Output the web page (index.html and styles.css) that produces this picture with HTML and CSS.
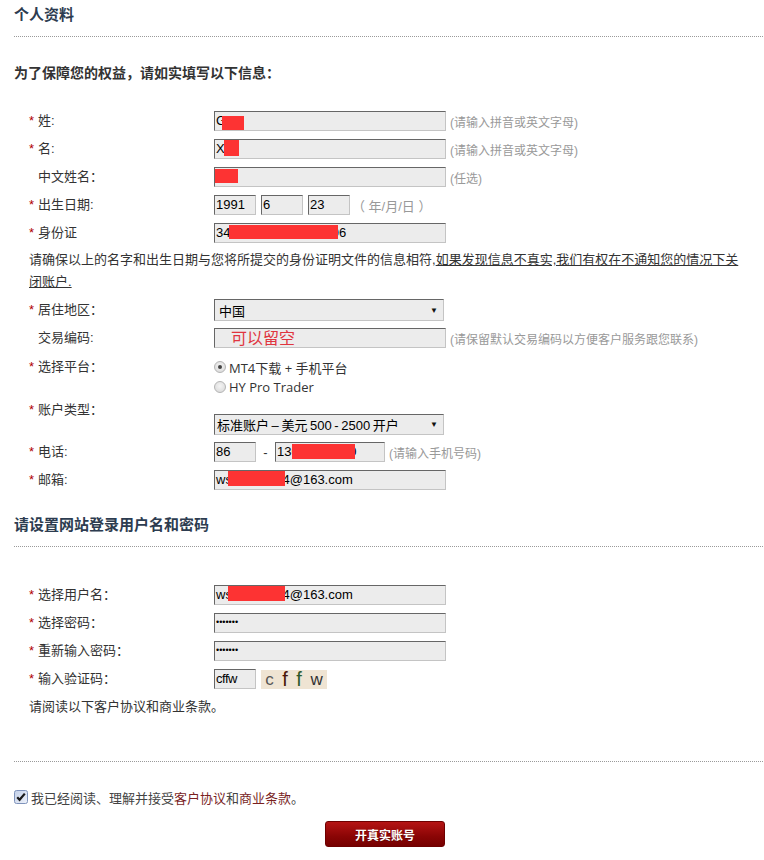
FILE: index.html
```html
<!DOCTYPE html>
<html lang="zh-CN">
<head>
<meta charset="utf-8">
<title>个人资料</title>
<link rel="stylesheet" href="styles.css">
</head>
<body>
<div class="page">
  <h2 class="section-title">个人资料</h2>
  <p class="intro">为了保障您的权益，请如实填写以下信息：</p>

  <div class="rows rows-first">
    <div class="row">
      <span class="lbl"><span class="star">*</span>姓:</span>
      <div class="field w-full">G<span class="redact r-last"></span></div>
      <span class="hint">(请输入拼音或英文字母)</span>
    </div>
    <div class="row">
      <span class="lbl"><span class="star">*</span>名:</span>
      <div class="field w-full">Xi<span class="redact r-first"></span></div>
      <span class="hint">(请输入拼音或英文字母)</span>
    </div>
    <div class="row">
      <span class="lbl lbl-plain">中文姓名：</span>
      <div class="field w-full"><span class="redact r-cn"></span></div>
      <span class="hint">(任选)</span>
    </div>
    <div class="row">
      <span class="lbl"><span class="star">*</span>出生日期:</span>
      <div class="date">
        <div class="field w-sm">1991</div>
        <div class="field w-sm">6</div>
        <div class="field w-sm">23</div>
      </div>
      <span class="hint hint-date">（ 年/月/日 ）</span>
    </div>
    <div class="row">
      <span class="lbl"><span class="star">*</span>身份证</span>
      <div class="field w-full">340000000000000006<span class="redact r-id"></span></div>
    </div>
  </div>

  <p class="notice">请确保以上的名字和出生日期与您将所提交的身份证明文件的信息相符,<u>如果发现信息不真实,我们有权在不通知您的情况下关闭账户.</u></p>

  <div class="rows">
    <div class="row row-region">
      <span class="lbl"><span class="star">*</span>居住地区：</span>
      <div class="select">中国<span class="arrow">▼</span></div>
    </div>
    <div class="row">
      <span class="lbl lbl-plain">交易编码:</span>
      <div class="field w-full code"><span class="leave">可以留空</span></div>
      <span class="hint">(请保留默认交易编码以方便客户服务跟您联系)</span>
    </div>
    <div class="row row-top row-platform">
      <span class="lbl"><span class="star">*</span>选择平台：</span>
      <div class="radios">
        <div class="radio-opt"><span class="radio checked"></span>MT4下载 + 手机平台</div>
        <div class="radio-opt"><span class="radio"></span>HY Pro Trader</div>
      </div>
    </div>
    <div class="row row-top row-account">
      <span class="lbl"><span class="star">*</span>账户类型：</span>
      <div class="select select-account">标准账户 – 美元 500 - 2500 开户<span class="arrow">▼</span></div>
    </div>
    <div class="row">
      <span class="lbl"><span class="star">*</span>电话:</span>
      <div class="field w-sm">86</div>
      <span class="dash">-</span>
      <div class="field w-md">13000000000<span class="redact r-phone"></span></div>
      <span class="hint">(请输入手机号码)</span>
    </div>
    <div class="row">
      <span class="lbl"><span class="star">*</span>邮箱:</span>
      <div class="field w-full">ws00000004@163.com<span class="redact r-email"></span></div>
    </div>
  </div>

  <h2 class="section-title second">请设置网站登录用户名和密码</h2>

  <div class="rows rows-login">
    <div class="row">
      <span class="lbl"><span class="star">*</span>选择用户名：</span>
      <div class="field w-full">ws00000004@163.com<span class="redact r-email"></span></div>
    </div>
    <div class="row">
      <span class="lbl"><span class="star">*</span>选择密码：</span>
      <div class="field w-full pw">•••••••</div>
    </div>
    <div class="row">
      <span class="lbl"><span class="star">*</span>重新输入密码：</span>
      <div class="field w-full pw">•••••••</div>
    </div>
    <div class="row">
      <span class="lbl"><span class="star">*</span>输入验证码：</span>
      <div class="field w-sm captcha-input">cffw</div>
      <div class="captcha"><span class="c1">c</span><span class="c2">f</span><span class="c3">f</span><span class="c4">w</span></div>
    </div>
  </div>
  <p class="read">请阅读以下客户协议和商业条款。</p>

  <div class="divider"></div>

  <div class="agree">
    <svg class="checkbox" width="14" height="14" viewBox="0 0 14 14">
      <defs>
        <linearGradient id="cbg" x1="0" y1="0" x2="1" y2="1">
          <stop offset="0" stop-color="#c3d0e8"/>
          <stop offset="1" stop-color="#eef2fa"/>
        </linearGradient>
      </defs>
      <rect x="0.5" y="0.5" width="13" height="13" rx="2" fill="url(#cbg)" stroke="#7f93bb"/>
      <path d="M3.2 7.2 L5.6 9.8 L10.8 3.6" fill="none" stroke="#1a1a1a" stroke-width="2.2"/>
    </svg>
    <span>我已经阅读、理解并接受<span class="link">客户协议</span>和<span class="link">商业条款</span>。</span>
  </div>

  <button class="submit" type="button">开真实账号</button>
</div>
</body>
</html>
```

FILE: styles.css
```css
html, body {
  margin: 0;
  padding: 0;
  background: #fff;
}
body {
  font-family: "Liberation Sans", "Noto Sans CJK SC", sans-serif;
  font-size: 13px;
  color: #333;
}
.page {
  padding: 0 1px 10px 14px;
}
.section-title {
  margin: 0;
  padding: 5px 0 11px;
  font-size: 15px;
  line-height: 20px;
  font-weight: bold;
  color: #2d3c50;
  border-bottom: 1px dotted #9a9a9a;
}
.section-title.second {
  margin-top: 16px;
}
.intro {
  margin: 26px 0 0;
  font-size: 14px;
  line-height: 20px;
  font-weight: bold;
  color: #333;
}
.rows {
  padding-left: 15px;
}
.rows-first {
  margin-top: 24px;
}
.rows-login {
  margin-top: 34px;
}
.row {
  display: flex;
  align-items: center;
  height: 28px;
}
.row-top {
  align-items: flex-start;
  height: auto;
}
.lbl {
  width: 185px;
  flex: none;
  color: #333;
  line-height: 20px;
  white-space: nowrap;
}
.lbl-plain {
  padding-left: 9px;
  box-sizing: border-box;
}
.star {
  display: inline-block;
  width: 9px;
  color: #b00000;
}
.field {
  position: relative;
  box-sizing: border-box;
  height: 20px;
  line-height: 18px;
  padding: 0 1px;
  background: #ececec;
  border: 1px solid;
  border-color: #666 #c4c4c4 #c4c4c4 #666;
  font-family: "Liberation Sans", sans-serif;
  font-size: 13px;
  color: #000;
  white-space: nowrap;
  overflow: hidden;
  flex: none;
}
.w-full { width: 232px; }
.w-sm { width: 42px; }
.w-md { width: 110px; }
.date {
  display: flex;
  gap: 5px;
}
.hint {
  margin-left: 4px;
  font-size: 12px;
  color: #999;
  white-space: nowrap;
}
.hint-date {
  font-size: 13px;
  margin-left: 2px;
}
.dash {
  width: 19px;
  text-align: center;
  color: #333;
}
.redact {
  position: absolute;
  background: #fd3333;
}
.r-last { left: 7px; top: 4px; width: 22px; height: 14px; }
.r-first { left: 9px; top: 0; width: 15px; height: 16px; }
.r-cn { left: -1px; top: 1px; width: 24px; height: 14px; }
.r-id { left: 14px; top: 1px; width: 109px; height: 14px; }
.r-phone { left: 16px; top: 1px; width: 63px; height: 15px; }
.r-email { left: 13px; top: 0; width: 57px; height: 15px; }

.notice {
  margin: 2px 0 0;
  padding-left: 15px;
  width: 714px;
  line-height: 22px;
  color: #333;
}
.notice u {
  text-decoration: underline;
}
.row-region {
  margin-top: 3px;
}
.select {
  box-sizing: border-box;
  width: 230px;
  height: 22px;
  padding: 0 5px 0 4px;
  display: flex;
  align-items: center;
  justify-content: space-between;
  background: #ececec;
  border: 1px solid;
  border-color: #666 #c4c4c4 #c4c4c4 #666;
  color: #000;
  font-family: "Liberation Sans", "Noto Sans CJK SC", sans-serif;
  font-size: 13px;
  white-space: nowrap;
}
.select-account {
  height: 21px;
  margin-top: 14px;
  padding-left: 2px;
  word-spacing: -1px;
}
.arrow {
  font-size: 8px;
  color: #111;
}
.code {
  line-height: 17px;
  overflow: visible;
}
.leave {
  padding-left: 15px;
  font-family: "Noto Sans CJK SC", sans-serif;
  font-size: 16px;
  color: #e0353f;
}
.row-platform {
  padding-top: 5px;
}
.radios {
  display: flex;
  flex-direction: column;
}
.radio-opt {
  display: flex;
  align-items: center;
  height: 20px;
  font-family: "Open Sans", "Noto Sans CJK SC", sans-serif;
  font-size: 13px;
  color: #333;
}
.radio {
  box-sizing: border-box;
  width: 12px;
  height: 12px;
  margin-right: 3px;
  border-radius: 50%;
  border: 1px solid #b4b4b4;
  background: radial-gradient(circle at 50% 40%, #f4f4f4, #d6d6d6);
  display: flex;
  align-items: center;
  justify-content: center;
}
.radio.checked::after {
  content: "";
  width: 4px;
  height: 4px;
  border-radius: 50%;
  background: #444;
}
.row-account {
  margin-top: 3px;
  margin-bottom: 3px;
}
.pw {
  font-size: 9px;
  line-height: 17px;
}
.captcha-input {
  letter-spacing: -0.5px;
}
.captcha {
  margin-left: 5px;
  width: 66px;
  height: 19px;
  background: #efe4d3;
  display: flex;
  align-items: center;
  justify-content: space-around;
  font-family: "Liberation Sans", sans-serif;
  font-size: 20px;
  line-height: 19px;
}
.c1 { color: #555; font-size: 17px; }
.c2 { color: #4a1608; }
.c3 { color: #2e5a2b; }
.c4 { color: #333; font-size: 17px; }
.read {
  margin: 4px 0 0;
  padding-left: 15px;
  line-height: 20px;
  color: #333;
}
.divider {
  margin-top: 44px;
  border-top: 1px dotted #9a9a9a;
}
.agree {
  margin-top: 25px;
  display: flex;
  align-items: center;
  height: 20px;
  color: #444;
}
.checkbox {
  margin-right: 3px;
  flex: none;
}
.link {
  color: #7a1f1f;
}
.submit {
  display: block;
  margin: 14px 0 0 311px;
  width: 120px;
  height: 26px;
  border: 1px solid #6e0000;
  border-radius: 3px;
  background: linear-gradient(#b51414, #8a0505 60%, #760000);
  color: #fff;
  font-family: "Noto Sans CJK SC", sans-serif;
  font-size: 12px;
  font-weight: bold;
  padding: 0;
  text-shadow: 0 1px 0 rgba(0,0,0,0.3);
}
```
